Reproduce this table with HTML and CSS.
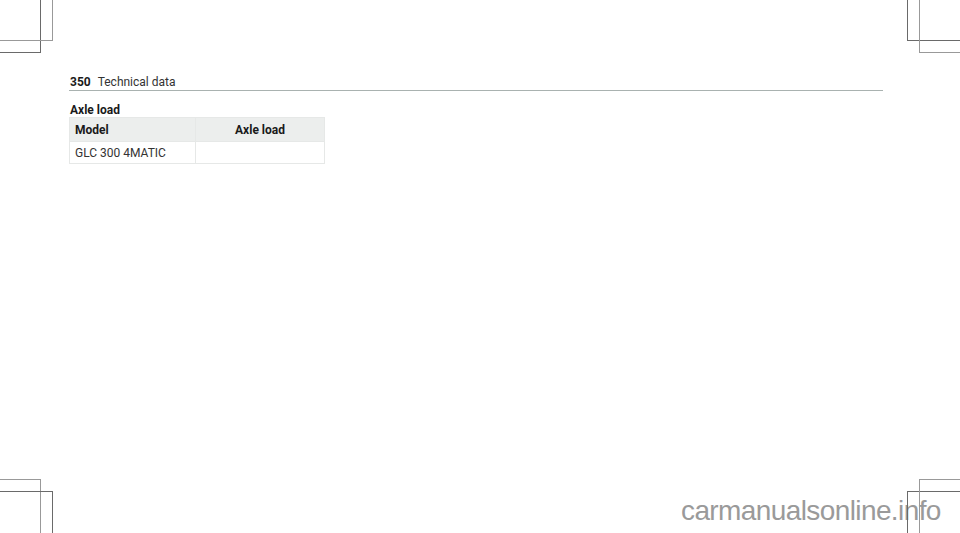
FILE: index.html
```html
<!DOCTYPE html>
<html lang="en">
<head>
    <meta charset="UTF-8">
    <title>Technical data</title>
    <link rel="stylesheet" href="styles.css">
</head>
<body>
    <div class="marks">
        <span class="mark tl-a"></span>
        <span class="mark tl-b"></span>
        <span class="mark tr-a"></span>
        <span class="mark tr-b"></span>
        <span class="mark bl-a"></span>
        <span class="mark bl-b"></span>
        <span class="mark br-a"></span>
        <span class="mark br-b"></span>
    </div>
    <div class="page">
        <div class="page-head">
            <span class="page-num">350</span>
            <span class="page-title">Technical data</span>
        </div>
        <h3 class="section-title">Axle load</h3>
        <table class="data-table">
            <tr>
                <th class="col-model">Model</th>
                <th class="col-load">Axle load</th>
            </tr>
            <tr>
                <td>GLC 300 4MATIC</td>
                <td></td>
            </tr>
        </table>
    </div>
    <div class="watermark">carmanualsonline.info</div>
</body>
</html>
```

FILE: styles.css
```css
body{
    margin: 0;
    font-family: Roboto, "Liberation Sans", sans-serif;
    color: #1a1a1a;
    background-color: white;
    width: 960px;
    height: 533px;
    overflow: hidden;
    position: relative;
}
.page{
    padding: 76px 0 0 69px;
}
.page-head{
    width: 814px;
    display: flex;
    align-items: baseline;
    gap: 7px;
    font-size: 12px;
    line-height: 13px;
    padding-bottom: 1px;
    border-bottom: 1px solid #a9b2b0;
}
.page-num{
    font-weight: 700;
    padding-left: 1px;
}
.page-title{
    color: #333;
}
.section-title{
    margin: 12px 0 0 1px;
    font-size: 12px;
    line-height: 14px;
    font-weight: 700;
}
.data-table{
    border-collapse: collapse;
    width: 256px;
    font-size: 12px;
}
.data-table th,
.data-table td{
    border: 1px solid #e6e8e7;
    text-align: left;
    padding: 0 5px;
}
.data-table th{
    background-color: #eceeed;
    height: 23px;
    font-weight: 700;
}
.data-table td{
    height: 21px;
    color: #333;
}
.col-model{
    width: 115px;
}
.data-table th.col-load{
    text-align: center;
}
/* crop marks */
.mark{
    position: absolute;
    display: block;
    border: 0 solid #6a6a6a;
}
.tl-a{ left: 0; top: 0; width: 40px; height: 52px; border-right-width: 1px; border-bottom-width: 1px; }
.tl-b{ left: 0; top: 0; width: 52px; height: 40px; border-right-width: 1px; border-bottom-width: 1px; border-color: #999; }
.tr-a{ right: 0; top: 0; width: 52px; height: 40px; border-left-width: 1px; border-bottom-width: 1px; }
.tr-b{ right: 0; top: 0; width: 40px; height: 52px; border-left-width: 1px; border-bottom-width: 1px; border-color: #999; }
.bl-a{ left: 0; bottom: 0; width: 40px; height: 53px; border-right-width: 1px; border-top-width: 1px; border-color: #999; }
.bl-b{ left: 0; bottom: 0; width: 52px; height: 41px; border-right-width: 1px; border-top-width: 1px; }
.br-a{ right: 0; bottom: 0; width: 52px; height: 41px; border-left-width: 1px; border-top-width: 1px; }
.br-b{ right: 0; bottom: 0; width: 40px; height: 53px; border-left-width: 1px; border-top-width: 1px; border-color: #999; }
.marks{
    position: absolute;
    inset: 0;
    z-index: 2;
}
.watermark{
    position: absolute;
    left: 681px;
    top: 495px;
    font-family: "Liberation Sans", Arial, sans-serif;
    font-size: 28px;
    letter-spacing: -0.6px;
    color: #9a9a9a;
}
```
